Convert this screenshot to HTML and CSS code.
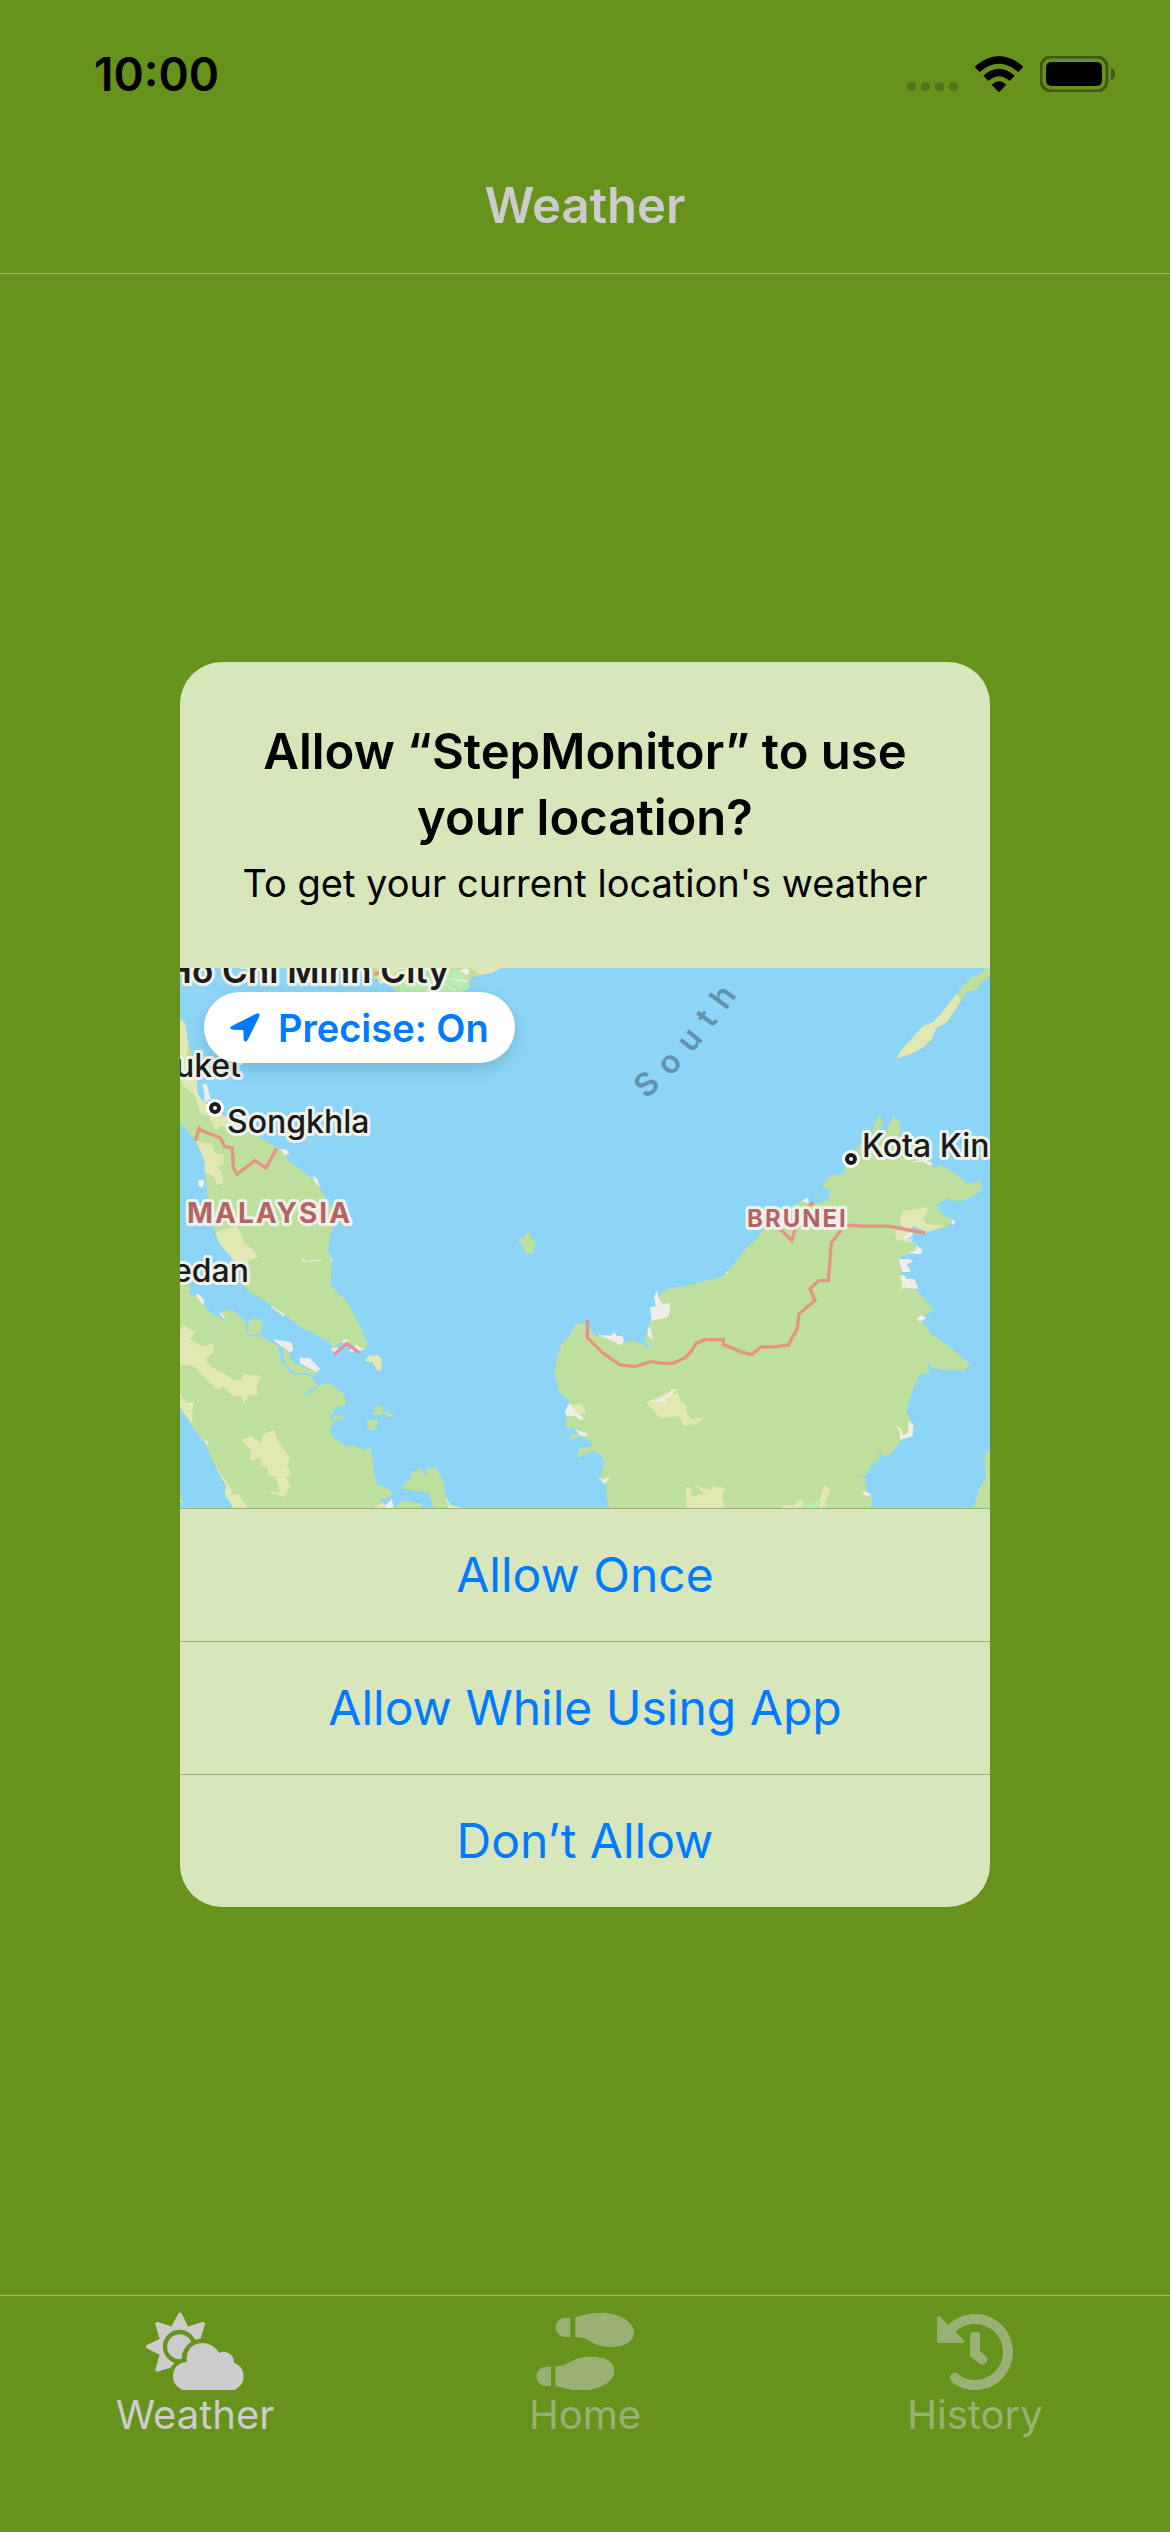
FILE: index.html
```html
<!DOCTYPE html>
<html lang="en">
<head>
<meta charset="utf-8">
<meta name="viewport" content="width=device-width, initial-scale=1">
<title>Weather</title>
<link rel="stylesheet" href="styles.css">
</head>
<body class="app">
<header class="top">
  <div class="status">
    <time class="clock">10:00</time>
    <div class="status-icons">
      <svg width="52" height="36" viewBox="0 0 52 36" fill="#527519" aria-hidden="true">
        <rect x="1" y="26" width="9" height="9" rx="4"/><rect x="15" y="26" width="9" height="9" rx="4"/><rect x="29" y="26" width="9" height="9" rx="4"/><rect x="43" y="26" width="9" height="9" rx="4"/>
      </svg>
      <svg width="50" height="36" viewBox="254 45 146 108" aria-hidden="true">
        <path d="M254 77Q327 13 400 77L385 93Q327 44 269 93Z"/>
        <path d="M280 104Q327 62 374 104L359 120Q327 92 295 120Z"/>
        <path d="M305 131Q327 111 349 131L327 154Z"/>
      </svg>
      <svg width="76" height="36" viewBox="0 0 76 36" aria-hidden="true">
        <rect x="1" y="1" width="66" height="34" rx="10" fill="none" stroke="#3f5a12" stroke-width="3"/>
        <rect x="6" y="6" width="56" height="24" rx="5"/>
        <path d="M71 12Q75 13 75 18T71 24Z" fill="#3f5a12"/>
      </svg>
    </div>
  </div>
  <h1 class="title">Weather</h1>
</header>

<main class="content">
  <section class="alert" role="dialog" aria-labelledby="alert-title" aria-describedby="alert-text">
    <div class="alert-head">
      <h2 class="alert-title" id="alert-title">Allow “StepMonitor” to use your location?</h2>
      <p class="alert-text" id="alert-text">To get your current location's weather</p>
    </div>
    <div class="map">
      <svg class="map-art" viewBox="0 0 810 540" role="img" aria-label="Map">
        <rect width="810" height="540" fill="#8cd5f7"/>
        <g transform="scale(.333333)">
          <!-- Mekong delta -->
          <g transform="translate(-30 -57)">
            <path fill="#bfdf9d" d="M500 57H995L965 72 930 78 905 85 895 100 898 118 870 129 690 132 660 110 600 80Z"/>
            <path fill="#e2e8b4" d="M640 57H690L660 85 632 108 620 85ZM905 57H995L965 72 930 78Z"/>
            <path fill="#b9ecb0" d="M690 100L780 85 860 62 885 85 898 118 870 129 690 132Z"/>
            <path fill="#f0eee6" d="M866 66L885 57 900 62 893 78ZM825 90L895 94 894 99ZM820 100L858 125 852 127Z"/>
            <path fill="none" stroke="#e69387" stroke-width="10" d="M612 76L640 68"/>
          </g>
          <!-- Malay Peninsula and Sumatra -->
          <g transform="translate(-30 813)">
            <path fill="#f0eee6" d="M95-465L110-465 122-420 105-408ZM330-270L350-268 358-255 340-250ZM427-190L442-180 450-155 435-165ZM105-200L130-208 128-195 110-185ZM85-176L100-178 103-165 95-153 85-160ZM235 105L260 93 280 105 285 125 225 136ZM78 165L88 166 103 185 98 205 80 185ZM148 222L165 220 172 255ZM308 301L365 310 370 335 355 340ZM390 356L420 358 450 390 440 400 388 372ZM300 200L320 202 350 225 340 232ZM470 50L488 60 485 72Z"/>
            <path fill="#bfdf9d" d="M30-658L44-652 50-615 55-580 78-535 90-495 78-468 84-435 105-408 150-375 250-315 330-270 360-230 430-180 465-125 490-80 490-35 478 0 475 35 485 70 482 140 530 185 550 225 570 260 592 315 586 332 560 324 530 312 512 308 492 330 475 305 395 265 350 232 315 208 285 185 240 160 220 140 238 90 190 55 150 15 135-20 130-40 115-110 108-170 105-210 104-235 75-295 50-330 30-350Z"/>
            <path fill="#e2e8b4" d="M30-658L44-652 50-615 55-580 50-550 62-535 78-535 84-435 105-408 170-365 205-340 200-325 150-340 138-325 115-370 90-380 75-430 40-460 30-500ZM78-295L125-285 135-255 162-255 160-225 145-215 158-190 160-172 140-160 135-185 104-200 104-235ZM135-20L200-40 215-10 225 15 245 28 265 55 240 62 225 80 195 70 150 15Z"/>
            <path fill="#8cd5f7" d="M80-468L98-465 105-425 95-418 82-440Z"/>
            <path fill="#f0eee6" d="M482 328L505 326 495 342ZM512 308L530 300 540 318ZM535 335L560 318 582 332 545 338ZM388 48L405 66 455 62 455 65 400 69Z"/>
            <path fill="#bfdf9d" d="M30 135H58L60 165 78 172 100 200 120 220 150 235 172 258 156 220 165 213 190 215 222 242 235 290 275 293 325 322 335 370 365 405 420 410 445 438 398 467 412 467 450 440 475 432 520 462 530 495 500 505 480 530 490 552 478 580 495 600 530 622 550 618 580 632 602 626 610 690 620 735 665 755 660 775 630 780 640 807H190L165 765 168 740 135 680 108 620 70 565 30 505ZM30 775L43 790 30 790Z"/>
            <path fill="#bfdf9d" d="M232 262L240 242 262 238 280 255 272 284 240 287ZM338 322L355 335 368 370 437 400 435 412 410 402 375 402 345 375ZM490 530L520 530 524 538 490 545ZM608 525L622 497 636 502 640 515 672 528 662 537 642 523 612 529ZM587 552L598 543 624 542 618 570 600 575ZM693 747L725 715 722 700 752 687 768 712 772 687 800 688 822 732 825 775 840 800 870 807H792L775 760 740 757ZM680 807L690 788 715 785 755 795 752 807Z"/>
            <path fill="#bfdf9d" d="M1046 5L1062-5 1075-23 1083-3 1098 8 1088 44 1060 42 1065 32Z"/>
            <path fill="#e2e8b4" d="M583 366L597 350 625 348 635 362 634 392 622 396 608 370ZM30 280L40 258 75 280 60 300 95 322 130 315 130 340 105 360 125 385 160 402 185 420 215 425 220 405 271 411 258 450 265 465 235 470 222 497 216 470 195 475 160 445 142 452 100 410 70 380 30 378ZM215 603L240 590 272 612 280 585 313 573 322 605 360 655 352 680 364 705 348 715 361 740 342 775 292 757 330 760 318 715 295 708 290 685 275 680 270 658 242 665 240 630ZM30 468L48 490 70 495 65 545 76 568 30 505ZM135 680L180 745 188 752 182 767 205 765 235 807H190L165 765 168 740ZM610 807L640 790 650 807ZM825 770L845 800 870 804V807H835Z"/>
            <path fill="#f0eee6" d="M645 800L665 780 672 807H650ZM50 495L70 492 69 500ZM100 600L114 608 112 618Z"/>
            <path fill="none" stroke="#e69387" stroke-width="10" d="M76-295L88-333 95-325 152-303 163-278 187-273 190-213 201-195 255-235 288-213 305-245 320-272"/>
            <path fill="none" stroke="#e58fa0" stroke-width="10" d="M492 347L530 313 569 342"/>
          </g>
          <!-- Borneo and Palawan -->
          <g transform="translate(1200 813)">
            <path fill="#bfdf9d" d="M-15 255L15 254 50 290 100 300 130 312 160 304 185 315 215 328 192 302 205 265 222 225 240 165 265 148 320 140 430 112 455 85 490 35 530 0 550-30 600-80 680-120 690-105 725-108 745-120 752-145 725-160 755-192 790-195 800-230 835-280 870-305 885-350 898-372 910-350 895-315 920-325 940-367 960-350 962-310 1050-240 1060-210 1080-222 1130-195 1160-165 1200-175 1208-150 1180-130 1140-112 1100-122 1070-102 1085-75 1120-55 1100-35 1040-20 1000-40 975-10 1000 10 1015 25 985 45 955 60 965 115 1020 165 1060 212 1020 240 1055 285 1110 325 1172 375 1150 395 1100 392 1060 388 1040 362 1050 398 1018 408 992 470 985 495 978 520 1000 560 960 610 932 645 910 652 892 632 900 660 870 680 865 705 838 716 857 718 860 765 877 770 872 807H88L78 765 80 735 62 715 72 670 60 645 38 635-8 657-5 630 38 620 30 605 0 590-28 605-28 585-5 585 20 590 0 570-42 565-42 520-30 490-65 455-77 400-65 340-50 305-30 290Z"/>
            <path fill="#e2e8b4" d="M200 490L265 460 297 465 300 485 320 500 318 520 335 540 374 535 352 554 310 560 297 530 280 535 240 537ZM316 742L335 750 333 765 345 775 355 765 378 765 342 738 395 755 398 742 437 748 426 768 436 807H320ZM732 740L752 750 735 795 745 803 717 807 720 780ZM600 807L620 795 640 800 662 780 672 790 665 807ZM970-85L1046-95 1030-60 1040-45 1090-40 1040-20 1000-40 975-5 950 5 945-25 970-30 958-60ZM950 0H1000L990 12ZM-35 500L5 495 20 520-20 530Z"/>
            <path fill="#b9ecb0" d="M668 798L695 795 718 780V807H665Z"/>
            <path fill="#f0eee6" d="M52 287L92 290 104 280 110 290 128 292 132 308 120 318 100 307ZM210 205L228 200 222 175 230 155 240 185 250 195 268 192 272 215 262 235 215 245ZM203 270L210 262 220 305 203 290ZM437 103L442 95 445 108ZM200 487L235 482 265 465 275 452 292 450 270 470 255 480 257 497 248 487ZM955 60L990 60 1000 68 980 75 992 98 967 100ZM960 110L972 107 980 120 1003 120 1016 150 990 148 972 145 957 158 968 140ZM980 42L1005 35 1010 20 1028 32 1022 46ZM1010 240L1022 228 1040 236 1020 248ZM970-5L1000-30 998-10 970 5ZM665-115L685-125 685-105ZM52 715L70 722 92 710 75 735ZM943 557L962 567 970 590 985 578 985 545 1000 555 998 592 960 602 958 572ZM850 755L873 765 870 770 850 768ZM-45 520L-38 500-30 492-15 515 15 540 0 543-15 530-40 532ZM-15 570L20 582 22 592 0 590ZM1115-60L1128-50 1115-42ZM980-228L1035-240 1060-225 1050-220 1030-232Z"/>
            <path fill="#bfdf9d" d="M950-542L960-560 985-590 1030-640 1060-650 1095-690 1130-735 1140-750 1155-765 1175-785 1190-790 1230-820V-790L1205-770 1195-750 1155-738 1140-710 1120-680 1100-650 1070-635 1055-600 1030-575 993-555ZM1232 630L1213 650 1218 720 1200 742 1180 807H1232Z"/>
            <path fill="#e2e8b4" d="M950-542L960-560 985-590 1030-640 1060-650 1095-690 1130-735 1143-715 1120-680 1100-650 1070-635 1055-600 1030-575 993-555Z"/>
            <path fill="none" stroke="#e69387" stroke-width="10" d="M22 243V296L70 343 120 378 165 383 212 368 250 373 280 372 316 356 335 335 348 313 375 302H430V317L487 340 516 346 543 324 590 323 625 318 652 268 657 225 705 184 690 150 716 125 745 124 754 13 795-42 840-39 930-38 985-27 1036-18M595-35L635 5 660-75 700-110"/>
          </g>
        </g>
        <g class="city">
          <text class="city-large" x="269" y="15" text-anchor="end">Ho Chi Minh City</text>
          <text x="61" y="109" text-anchor="end">Phuket</text>
          <text x="47" y="165">Songkhla</text>
          <text x="69" y="314" text-anchor="end">Medan</text>
          <text x="682" y="189">Kota Kinabalu</text>
        </g>
        <g fill="#fff" stroke="#1b1b1b" stroke-width="4">
          <circle cx="35" cy="140" r="7" fill="none" stroke="#fff"/><circle cx="35" cy="140" r="4"/>
          <circle cx="671" cy="191" r="7" fill="none" stroke="#fff"/><circle cx="671" cy="191" r="4"/>
        </g>
        <text class="country" x="7" y="255">MALAYSIA</text>
        <text class="country country-small" x="567" y="259">BRUNEI</text>
        <path id="sea" fill="none" d="M466 131Q506 100 568 12"/>
        <text class="sea"><textPath href="#sea">South</textPath></text>
      </svg>
      <button class="precise" type="button">
        <svg width="30" height="30" viewBox="179 191 90 90" fill="#007aff" aria-hidden="true"><path d="M183 231L258 193Q270 189 267 201L232 272Q224 283 220 272L219 242 188 241Q174 239 183 231Z"/></svg>
        Precise: On
      </button>
    </div>
    <div class="actions">
      <button class="action" type="button">Allow Once</button>
      <button class="action" type="button">Allow While Using App</button>
      <button class="action" type="button">Don’t Allow</button>
    </div>
  </section>
</main>

<nav class="tabs">
  <a class="tab tab-active" href="#weather" aria-current="page">
    <svg width="98" height="78" viewBox="168 96 294 234" fill="currentColor" aria-hidden="true">
      <defs><mask id="behind"><rect x="160" y="90" width="310" height="250" fill="#fff"/><circle cx="269" cy="200" r="44" fill="none" stroke="#000" stroke-width="13"/><g fill="#000" stroke="#000" stroke-width="27"><circle cx="338" cy="239" r="50"/><circle cx="290" cy="289" r="41"/></g></mask></defs>
      <path mask="url(#behind)" stroke="currentColor" stroke-width="12" stroke-linejoin="round" d="M270 104L291 147 339 132 324 181 360 200 324 219 339 268 291 253 270 296 247 255 202 269 216 221 174 200 216 180 202 132 247 147Z"/>
      <path d="M290 246Q287 191 338 189Q371 191 387 219Q398 213 409 217Q432 224 432 248Q461 259 461 289Q461 317 434 330H277Q249 317 249 289Q250 250 290 246Z"/>
    </svg>
    Weather
  </a>
  <a class="tab" href="#home">
    <svg width="98" height="78" viewBox="107 96 294 234" fill="currentColor" aria-hidden="true">
      <path d="M210 113V171H195A29 29 0 0 1 195 113ZM225 112Q265 98 300 98C357 98 401 125 401 157Q399 202 325 201C270 198 270 171 225 171ZM152 260V318H137A29 29 0 0 1 137 260ZM165 259C210 257 210 233 265 230Q341 228 342 274C341 307 297 332 240 332Q210 331 165 318Z"/>
    </svg>
    Home
  </a>
  <a class="tab" href="#history">
    <svg width="76" height="78" viewBox="171 96 228 234" fill="none" stroke="currentColor" aria-hidden="true">
      <path stroke-width="30" d="M212 149A99 99 0 1 1 224 294"/>
      <circle cx="225" cy="293" r="15" fill="currentColor" stroke="none"/>
      <path fill="currentColor" stroke-width="10" stroke-linejoin="round" d="M176 113V184H248Z"/>
      <path fill="currentColor" stroke="none" d="M270 165Q271 156 280 156H290Q299 156 300 165V214L320 231Q326 238 320 245L313 252Q307 257 300 252L270 229Z"/>
    </svg>
    History
  </a>
</nav>
</body>
</html>
```
FILE: styles.css
```css
*, *::before, *::after { box-sizing: border-box; }

.app {
  margin: 0;
  min-height: 100vh;
  display: flex;
  flex-direction: column;
  background: #67921b;
  color: #000;
  font-family: Inter, "Liberation Sans", sans-serif;
}

.top { border-bottom: 1px solid #a4ae88; }

.status {
  display: flex;
  align-items: center;
  justify-content: space-between;
  padding: 44px 54px 40px 94px;
  height: 144px;
}
.clock { font-size: 46px; line-height: 60px; font-weight: 600; }
.status-icons { display: flex; align-items: center; gap: 16px; }

.title {
  margin: 0;
  padding: 32px 0 37px;
  text-align: center;
  font-size: 49px;
  line-height: 60px;
  font-weight: 600;
  color: #ccc;
}

.content {
  flex: 1;
  display: flex;
  align-items: center;
  justify-content: center;
  padding: 32px;
}

.alert {
  width: 100%;
  max-width: 810px;
  overflow: hidden;
  border-radius: 42px;
  background: #d8e7bb;
}
.alert-head { padding: 57px 48px 53px; text-align: center; }
.alert-title { margin: 0; font-size: 49px; line-height: 66px; font-weight: 600; }
.alert-text { margin: 0; font-size: 38px; line-height: 64px; }

.map { position: relative; }
.map-art { display: block; width: 100%; height: auto; }
.city, .country, .sea { font-size: 32px; }
.city, .country {
  fill: #1b1b1b;
  font-weight: 500;
  stroke: #eef2ea;
  stroke-width: 6px;
  stroke-linejoin: round;
  paint-order: stroke;
}
.city-large { font-size: 35px; font-weight: 600; }
.country { font-size: 28px; font-weight: 700; fill: #b56363; letter-spacing: 2px; }
.country-small { font-size: 24px; }
.sea { fill: #5f93ae; font-weight: 600; letter-spacing: 12px; }

.precise {
  position: absolute;
  top: 24px;
  left: 24px;
  display: flex;
  align-items: center;
  gap: 18px;
  height: 71px;
  padding: 0 26px;
  border: 0;
  border-radius: 36px;
  background: #fff;
  box-shadow: 0 6px 16px rgba(0, 0, 0, .15);
  color: #007aff;
  font: 600 38px/48px Inter, "Liberation Sans", sans-serif;
  white-space: nowrap;
}

.actions { display: flex; flex-direction: column; }
.action {
  height: 133px;
  padding: 0;
  border: 0;
  border-top: 1px solid #9bb26a;
  background: none;
  color: #007aff;
  font: 400 48px/60px Inter, "Liberation Sans", sans-serif;
}

.tabs {
  display: grid;
  grid-template-columns: repeat(3, 1fr);
  height: 237px;
  border-top: 1px solid #a9ae9b;
}
.tab {
  display: flex;
  flex-direction: column;
  align-items: center;
  padding-top: 16px;
  color: #9bb075;
  font-size: 40px;
  line-height: 50px;
  text-decoration: none;
}
.tab-active { color: #ccc; }
```
